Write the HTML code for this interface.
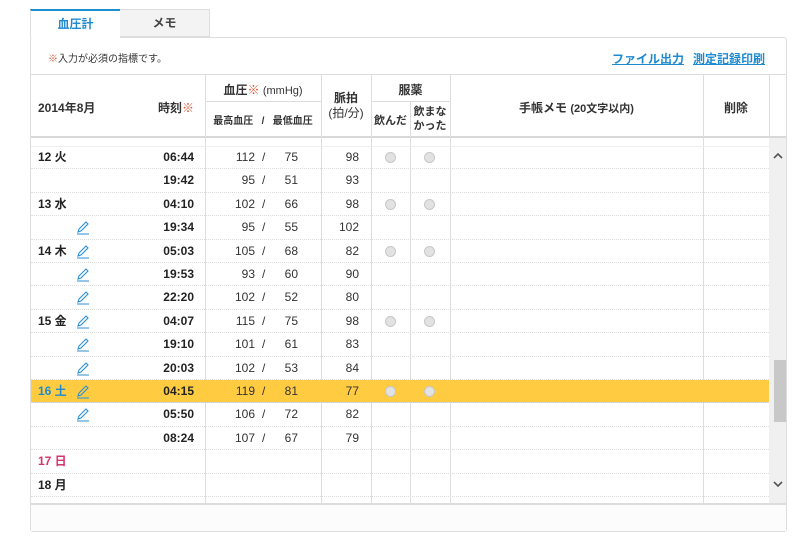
<!DOCTYPE html>
<html><head><meta charset="utf-8"><style>
*{margin:0;padding:0;box-sizing:border-box}
body{width:800px;height:537px;background:#fff;font-family:"Liberation Sans","Noto Sans CJK JP",sans-serif;font-size:12px;color:#222;position:relative;overflow:hidden}
.a{position:absolute}
.tab1{left:30px;top:9px;width:90px;height:29px;border-top:2px solid #1e90d0;border-left:1px solid #ddd;background:#fff;color:#1e8bd0;font-weight:bold;text-align:center;line-height:27px;z-index:2}
.tab2{left:119px;top:9px;width:91px;height:28px;border:1px solid #ddd;background:#f3f3f3;color:#444;font-weight:bold;text-align:center;line-height:27px}
.box{left:30px;top:37px;width:757px;height:495px;border:1px solid #ddd;border-radius:3px;background:#fff}
.vl{position:absolute;width:1px;background:#ddd}
.hl{position:absolute;height:1px;background:#ddd}
.hd{position:absolute;font-weight:bold;font-size:11px;color:#333;text-align:center}
.row{position:absolute;left:31px;width:738px;height:23.4px;border-bottom:1px dotted #ddd}
.row span{position:absolute;top:0;line-height:22px;height:22px;font-size:12px}
.d{left:7px;font-weight:bold}
.t{font-weight:bold;width:60px;text-align:right}
.s{left:190px;width:34px;text-align:right;color:#333}
.sl{left:231px;color:#333}
.di{left:245px;width:22px;text-align:right;color:#333}
.p{left:300px;width:28px;text-align:right;color:#333}
.r{position:absolute;width:11px;height:11px;border-radius:50%;background:#e2e2e2;border:1px solid #c8c8c8;top:6px}
.pen{position:absolute;left:45px;top:4px}
</style></head><body>
<div class="a tab1">血圧計</div>
<div class="a tab2">メモ</div>
<div class="a box"></div>
<div class="a" style="left:48px;top:50px;font-size:10px;color:#333"><span style="color:#e0542f">※</span>入力が必須の指標です。</div>
<div class="a" style="left:612px;top:50px;font-size:12px;font-weight:bold;color:#1e8bd0;text-decoration:underline">ファイル出力</div>
<div class="a" style="left:693px;top:50px;font-size:12px;font-weight:bold;color:#1e8bd0;text-decoration:underline">測定記録印刷</div>
<div class="hl" style="left:31px;top:74px;width:755px"></div>
<div class="hl" style="left:31px;top:136px;width:755px;height:2px;background:#d8d8d8"></div>
<div class="hl" style="left:205px;top:101px;width:116px"></div>
<div class="hl" style="left:371px;top:101px;width:79px"></div>
<div class="vl" style="left:205px;top:75px;height:428px"></div>
<div class="vl" style="left:321px;top:75px;height:428px"></div>
<div class="vl" style="left:371px;top:75px;height:428px"></div>
<div class="vl" style="left:410px;top:101px;height:402px"></div>
<div class="vl" style="left:450px;top:75px;height:428px"></div>
<div class="vl" style="left:703px;top:75px;height:428px"></div>
<div class="vl" style="left:769px;top:75px;height:428px"></div>
<div class="hd" style="left:38px;top:99px;font-size:12px">2014年8月</div>
<div class="hd" style="left:158px;top:99px;font-size:12px">時刻<span style="color:#e0542f">※</span></div>
<div class="hd" style="left:205px;top:81px;width:116px;font-size:12px">血圧<span style="color:#e0542f">※</span> <span style="font-weight:normal;font-size:11px">(mmHg)</span></div>
<div class="hd" style="left:205px;top:112px;width:116px;font-size:10px">最高血圧 &nbsp;&nbsp;/ &nbsp;&nbsp;最低血圧</div>
<div class="hd" style="left:321px;top:91px;width:50px;font-size:12px;line-height:15px">脈拍<br><span style="font-weight:normal">(拍/分)</span></div>
<div class="hd" style="left:371px;top:81px;width:79px;font-size:12px">服薬</div>
<div class="hd" style="left:371px;top:112px;width:39px">飲んだ</div>
<div class="hd" style="left:410px;top:105px;width:40px;line-height:14px">飲まな<br>かった</div>
<div class="hd" style="left:450px;top:99px;width:253px;font-size:12px">手帳メモ <span style="font-size:11px">(20文字以内)</span></div>
<div class="hd" style="left:703px;top:99px;width:66px;font-size:12px">削除</div>
<div class="hl" style="left:31px;top:146px;width:738px;background:#eee"></div>
<div id="rows"></div>
<div class="a" style="left:769px;top:138px;width:17px;height:365px;background:#f0f0f0"></div>
<div class="a" style="left:774px;top:360px;width:12px;height:62px;background:#c8c8c8"></div>
<svg class="a" style="left:773px;top:152px" width="10" height="8"><path d="M1 6 L5 2 L9 6" fill="none" stroke="#555" stroke-width="1.6"/></svg>
<svg class="a" style="left:773px;top:480px" width="10" height="8"><path d="M1 2 L5 6 L9 2" fill="none" stroke="#555" stroke-width="1.6"/></svg>
<div class="hl" style="left:31px;top:503px;width:755px;height:2px;background:#ddd"></div>
<div class="a" style="left:31px;top:505px;width:755px;height:26px;background:#fcfcfc"></div>
<script>
var pen='<svg class="pen" width="14" height="15" viewBox="0 0 14 15"><path d="M2 12 L3 9 L10 2 L12 4 L5 11 Z M1 14 H13" fill="none" stroke="#2a8fd6" stroke-width="1.1"/></svg>';
var D=[["12 火","06:44","112","75","98",1,0],["","19:42","95","51","93",0,0],["13 水","04:10","102","66","98",1,0],["","19:34","95","55","102",0,1],["14 木","05:03","105","68","82",1,1],["","19:53","93","60","90",0,1],["","22:20","102","52","80",0,1],["15 金","04:07","115","75","98",1,1],["","19:10","101","61","83",0,1],["","20:03","102","53","84",0,1],["16 土","04:15","119","81","77",1,1],["","05:50","106","72","82",0,1],["","08:24","107","67","79",0,0],["17 日","","","","",0,0],["18 月","","","","",0,0]];
var h='';
D.forEach(function(r,i){var top=146+i*23.4;var bg=i==10?'background:#ffcb40;':'';var dc=i==10?'color:#1e8bd0':(i==13?'color:#d6336c':'');
h+='<div class="row" style="top:'+top+'px;'+bg+'"><span class="d" style="'+dc+'">'+r[0]+'</span>'+(r[6]?pen:'')+'<span class="t" style="left:103px">'+r[1]+'</span>'+(r[2]?'<span class="s">'+r[2]+'</span><span class="sl">/</span><span class="di">'+r[3]+'</span><span class="p">'+r[4]+'</span>':'')+(r[5]?'<div class="r" style="left:354px"></div><div class="r" style="left:393px"></div>':'')+'</div>';});
document.getElementById('rows').innerHTML=h;
</script>
</body></html>
